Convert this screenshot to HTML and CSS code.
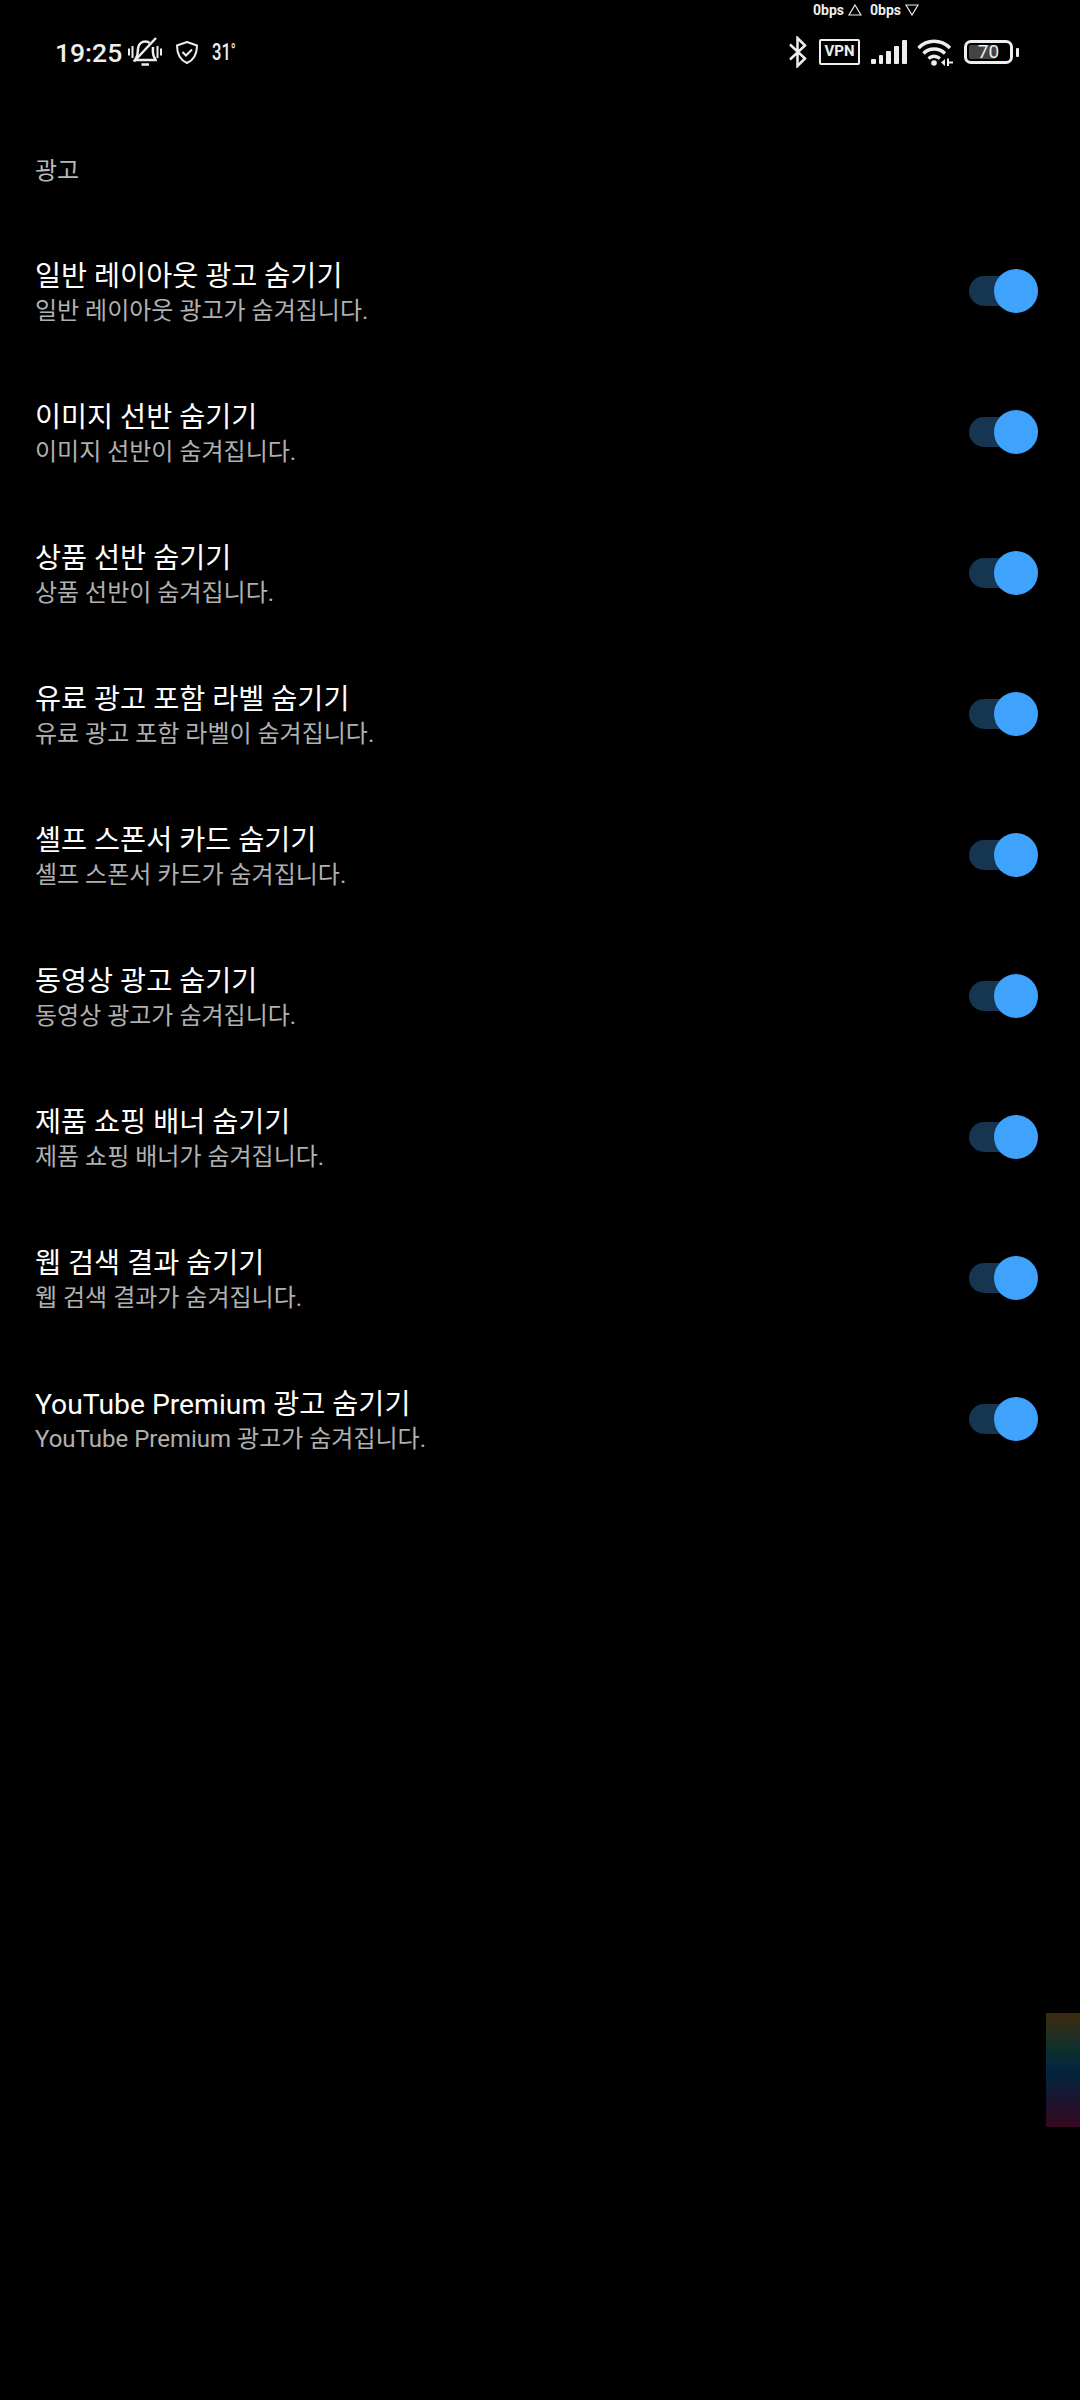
FILE: index.html
```html
<!DOCTYPE html>
<html lang="ko">
<head>
    <meta charset="UTF-8">
    <meta name="viewport" content="width=device-width, initial-scale=1.0">
    <title>광고</title>
    <link rel="stylesheet" href="styles.css">
</head>
<body>
    <header class="status-bar">
        <div class="speed-row">
            <span>0bps</span>
            <svg class="speed-icon" viewBox="0 0 14 12"><path d="M7 1 L13 11 H1 Z"/></svg>
            <span class="speed-down">0bps</span>
            <svg class="speed-icon" viewBox="0 0 14 12"><path d="M1 1 H13 L7 11 Z"/></svg>
        </div>
        <div class="status-row">
            <div class="status-left">
                <span class="clock">19:25</span>
                <svg class="icon-bell" viewBox="0 0 34 30">
                    <path d="M8 21 C10.500 18 9.500 14.500 10 11.500 C10.500 7.500 13.500 4.500 17.500 4.500 C19 4.500 20.500 5 21.500 6 M25 10 C25 14 24 18 27 21.500 L27.500 23 H7 L8 21" class="line"/>
                    <path d="M13.500 27.500 H21" class="line"/>
                    <path d="M28 1 L6 24.500" class="line"/>
                    <path d="M1 11.500 V18.500 M4.500 9 V21 M29.500 9 V21 M33 11.500 V18.500" class="line thin"/>
                </svg>
                <svg class="icon-shield" viewBox="0 0 22 23">
                    <path d="M11 1 L21 4.500 C21 12 19 18.500 11 22 C3 18.500 1 12 1 4.500 Z" class="line thin"/>
                    <path d="M6.500 11 L10 14.500 L16 8.500" class="line thin"/>
                </svg>
                <span class="temp">31<sup class="temp-deg">°</sup></span>
            </div>
            <div class="status-right">
                <svg class="icon-bt" viewBox="0 0 20 32">
                    <path d="M2 8.500 L17 22.500 L9.500 30 V2 L17 9.500 L2 23.500" class="line"/>
                </svg>
                <span class="vpn">VPN</span>
                <svg class="icon-signal" viewBox="0 0 36 24">
                    <rect x="0" y="19" width="5" height="5" rx="1"/>
                    <rect x="8" y="15" width="4" height="9" rx="1"/>
                    <rect x="15" y="11" width="5" height="13" rx="1"/>
                    <rect x="23" y="6" width="5" height="18" rx="1"/>
                    <rect x="31" y="0" width="5" height="24" rx="1"/>
                </svg>
                <svg class="icon-wifi" viewBox="0 0 36 28">
                    <path d="M1.500 10 C10 1 24 1 33 10" class="line wide"/>
                    <path d="M6.500 15.500 C12 9.500 22 9.500 28 15.500" class="line wide"/>
                    <path d="M11.500 20.500 C15 17.500 19 17.500 23 20.500" class="line wide"/>
                    <circle cx="17" cy="25" r="2.800"/>
                    <path d="M24 24.500 L28 21 V28 Z M30 20.500 H32 V23.500 H36 V25.500 H32 V28 H30 Z"/>
                </svg>
                <div class="battery">
                    <div class="battery-body">
                        <div class="battery-fill"></div>
                        <span class="battery-level">70</span>
                    </div>
                    <div class="battery-tip"></div>
                </div>
            </div>
        </div>
    </header>

    <main>
        <h2 class="section-label">광고</h2>
        <ul class="settings" id="settings"></ul>
    </main>

    <div class="edge-handle"></div>

    <script>
        const rows = [
            ['일반 레이아웃 광고 숨기기', '일반 레이아웃 광고가 숨겨집니다.'],
            ['이미지 선반 숨기기', '이미지 선반이 숨겨집니다.'],
            ['상품 선반 숨기기', '상품 선반이 숨겨집니다.'],
            ['유료 광고 포함 라벨 숨기기', '유료 광고 포함 라벨이 숨겨집니다.'],
            ['셸프 스폰서 카드 숨기기', '셸프 스폰서 카드가 숨겨집니다.'],
            ['동영상 광고 숨기기', '동영상 광고가 숨겨집니다.'],
            ['제품 쇼핑 배너 숨기기', '제품 쇼핑 배너가 숨겨집니다.'],
            ['웹 검색 결과 숨기기', '웹 검색 결과가 숨겨집니다.'],
            ['YouTube Premium 광고 숨기기', 'YouTube Premium 광고가 숨겨집니다.']
        ];

        const list = document.getElementById('settings');
        rows.forEach(row => {
            let item = document.createElement('li');
            item.classList.add('setting');
            item.innerHTML = `
                <div class="setting-text">
                    <div class="setting-title">${row[0]}</div>
                    <div class="setting-desc">${row[1]}</div>
                </div>
                <div class="switch"><div class="knob"></div></div>
            `;
            list.appendChild(item);
        });
    </script>
</body>
</html>
```

FILE: styles.css
```css
body {
    font-family: "Roboto", "Noto Sans CJK KR", sans-serif;
    margin: 0;
    padding: 0;
    width: 1080px;
    height: 2400px;
    overflow: hidden;
    background-color: #000;
    color: #fff;
    position: relative;
}

svg {
    display: block;
    fill: #eee;
}

.line {
    fill: none;
    stroke: #eee;
    stroke-width: 2.5;
}

.thin {
    stroke-width: 2;
}

.wide {
    stroke-width: 3.4;
}

.status-bar {
    height: 90px;
}

.speed-row {
    display: flex;
    justify-content: flex-end;
    align-items: center;
    height: 20px;
    padding-right: 161px;
    font-size: 14px;
    font-weight: 700;
    color: #eee;
}

.speed-icon {
    width: 14px;
    height: 12px;
    margin-left: 4px;
    fill: none;
    stroke: #eee;
    stroke-width: 1.2;
}

.speed-down {
    margin-left: 8px;
}

.status-row {
    display: flex;
    justify-content: space-between;
    align-items: center;
    height: 64px;
    padding: 0 61px 0 55px;
}

.status-left,
.status-right {
    display: flex;
    align-items: center;
}

.clock {
    font-size: 26.5px;
    font-weight: 500;
    color: #eee;
}

.icon-bell {
    width: 34px;
    height: 30px;
    margin-left: 6px;
}

.icon-shield {
    width: 22px;
    height: 23px;
    margin-left: 14px;
}

.temp {
    display: inline-block;
    font-size: 23px;
    font-weight: 500;
    margin-left: 14px;
    color: #eee;
    transform: scaleX(0.72);
    transform-origin: left center;
}

.temp-deg {
    font-size: 18px;
    line-height: 0;
    vertical-align: 3px;
}

.icon-bt {
    width: 20px;
    height: 32px;
}

.vpn {
    box-sizing: border-box;
    width: 41px;
    height: 26px;
    margin-left: 11px;
    border: 2.5px solid #eee;
    border-radius: 2px;
    font-size: 15px;
    line-height: 21px;
    font-weight: 700;
    text-align: center;
    color: #eee;
}

.icon-signal {
    width: 36px;
    height: 24px;
    margin-left: 11px;
}

.icon-wifi {
    width: 36px;
    height: 28px;
    margin-left: 10px;
}

.battery {
    display: flex;
    align-items: center;
    margin-left: 11px;
}

.battery-body {
    position: relative;
    box-sizing: border-box;
    width: 49px;
    height: 24px;
    border: 3px solid #eee;
    border-radius: 7px;
    padding: 2px;
}

.battery-fill {
    width: 70%;
    height: 100%;
    background-color: #444;
    border-radius: 2px;
}

.battery-level {
    position: absolute;
    top: 0;
    left: 0;
    width: 100%;
    text-align: center;
    font-size: 19px;
    line-height: 18px;
    color: #eee;
}

.battery-tip {
    width: 3px;
    height: 9px;
    margin-left: 3px;
    background-color: #eee;
    border-radius: 1px;
}

.section-label {
    margin: 0;
    padding: 63px 35px 0;
    height: 67px;
    font-size: 24px;
    line-height: 36px;
    font-weight: 400;
    color: #b8b8b8;
}

.settings {
    margin: 0;
    padding: 0;
    list-style-type: none;
}

.setting {
    display: flex;
    justify-content: space-between;
    align-items: center;
    height: 141px;
    padding: 0 42px 0 35px;
}

.setting-text {
    display: flex;
    flex-direction: column;
    padding-top: 5px;
}

.setting-title {
    font-size: 28.3px;
    line-height: 36px;
    color: #fff;
}

.setting-desc {
    font-size: 24px;
    line-height: 32px;
    color: #b0b0b0;
}

.switch {
    position: relative;
    width: 60px;
    height: 30px;
    border-radius: 15px;
    background-color: #153550;
    margin-right: 9px;
}

.knob {
    position: absolute;
    top: -7px;
    right: -9px;
    width: 44px;
    height: 44px;
    border-radius: 50%;
    background-color: #3fa2fd;
}

.edge-handle {
    position: absolute;
    left: 1046px;
    top: 2013px;
    width: 34px;
    height: 114px;
    background: linear-gradient(to bottom, #3f2a10, #10302a 30%, #03263f 50%, #181530 75%, #35081f);
}
```
